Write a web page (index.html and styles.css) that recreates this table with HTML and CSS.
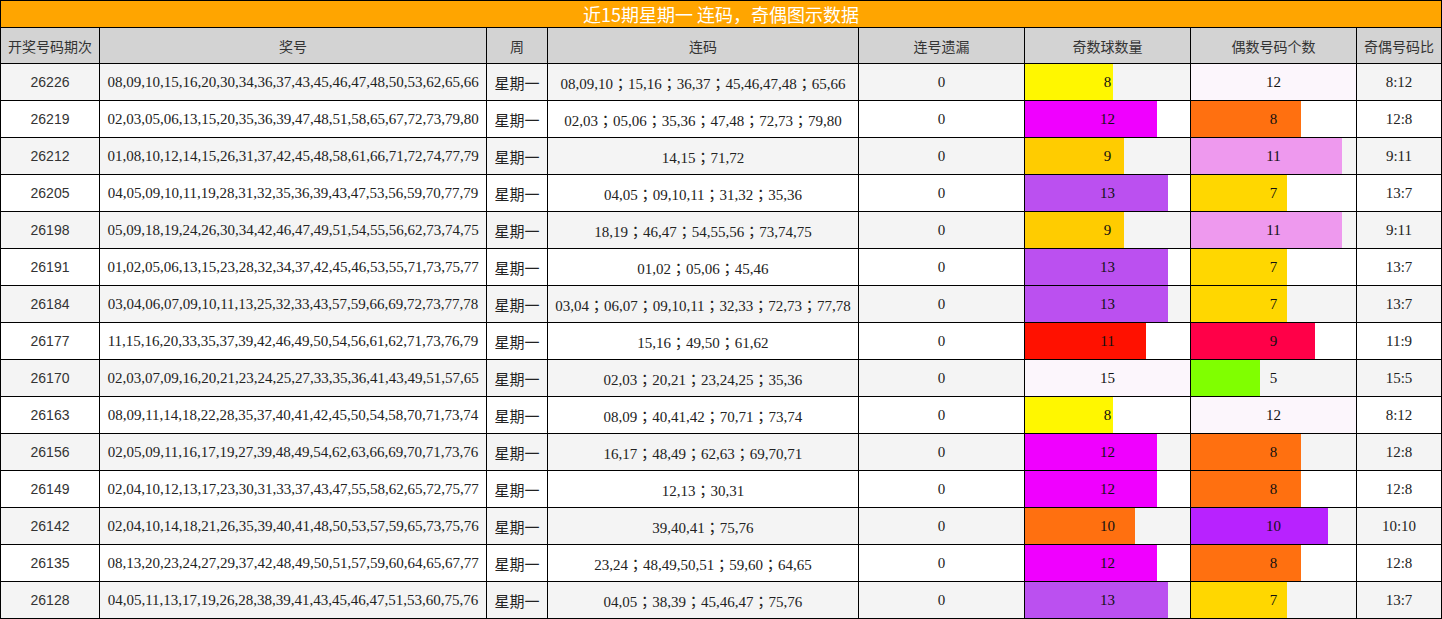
FILE: index.html
```html
<!DOCTYPE html>
<html lang="zh-CN">
<head>
<meta charset="utf-8">
<title>近15期星期一 连码，奇偶图示数据</title>
<link rel="stylesheet" href="styles.css">
</head>
<body>
<div class="board">
  <div class="title">近15期星期一 连码，奇偶图示数据</div>

  <div class="row head">
    <div class="cell">开奖号码期次</div>
    <div class="cell">奖号</div>
    <div class="cell">周</div>
    <div class="cell">连码</div>
    <div class="cell">连号遗漏</div>
    <div class="cell">奇数球数量</div>
    <div class="cell">偶数号码个数</div>
    <div class="cell">奇偶号码比</div>
  </div>

  <div class="row alt">
    <div class="cell issue">26226</div>
    <div class="cell num">08,09,10,15,16,20,30,34,36,37,43,45,46,47,48,50,53,62,65,66</div>
    <div class="cell num">星期一</div>
    <div class="cell num run">08,09,10；15,16；36,37；45,46,47,48；65,66</div>
    <div class="cell num">0</div>
    <div class="cell bar"><span class="fill c-yellow" style="width:53.33%"></span><span class="lbl">8</span></div>
    <div class="cell bar"><span class="fill c-pale" style="width:100%"></span><span class="lbl">12</span></div>
    <div class="cell num">8:12</div>
  </div>

  <div class="row">
    <div class="cell issue">26219</div>
    <div class="cell num">02,03,05,06,13,15,20,35,36,39,47,48,51,58,65,67,72,73,79,80</div>
    <div class="cell num">星期一</div>
    <div class="cell num run">02,03；05,06；35,36；47,48；72,73；79,80</div>
    <div class="cell num">0</div>
    <div class="cell bar"><span class="fill c-magenta" style="width:80%"></span><span class="lbl">12</span></div>
    <div class="cell bar"><span class="fill c-orange" style="width:66.67%"></span><span class="lbl">8</span></div>
    <div class="cell num">12:8</div>
  </div>

  <div class="row alt">
    <div class="cell issue">26212</div>
    <div class="cell num">01,08,10,12,14,15,26,31,37,42,45,48,58,61,66,71,72,74,77,79</div>
    <div class="cell num">星期一</div>
    <div class="cell num run">14,15；71,72</div>
    <div class="cell num">0</div>
    <div class="cell bar"><span class="fill c-amber" style="width:60%"></span><span class="lbl">9</span></div>
    <div class="cell bar"><span class="fill c-violet" style="width:91.67%"></span><span class="lbl">11</span></div>
    <div class="cell num">9:11</div>
  </div>

  <div class="row">
    <div class="cell issue">26205</div>
    <div class="cell num">04,05,09,10,11,19,28,31,32,35,36,39,43,47,53,56,59,70,77,79</div>
    <div class="cell num">星期一</div>
    <div class="cell num run">04,05；09,10,11；31,32；35,36</div>
    <div class="cell num">0</div>
    <div class="cell bar"><span class="fill c-purple" style="width:86.67%"></span><span class="lbl">13</span></div>
    <div class="cell bar"><span class="fill c-gold" style="width:58.33%"></span><span class="lbl">7</span></div>
    <div class="cell num">13:7</div>
  </div>

  <div class="row alt">
    <div class="cell issue">26198</div>
    <div class="cell num">05,09,18,19,24,26,30,34,42,46,47,49,51,54,55,56,62,73,74,75</div>
    <div class="cell num">星期一</div>
    <div class="cell num run">18,19；46,47；54,55,56；73,74,75</div>
    <div class="cell num">0</div>
    <div class="cell bar"><span class="fill c-amber" style="width:60%"></span><span class="lbl">9</span></div>
    <div class="cell bar"><span class="fill c-violet" style="width:91.67%"></span><span class="lbl">11</span></div>
    <div class="cell num">9:11</div>
  </div>

  <div class="row">
    <div class="cell issue">26191</div>
    <div class="cell num">01,02,05,06,13,15,23,28,32,34,37,42,45,46,53,55,71,73,75,77</div>
    <div class="cell num">星期一</div>
    <div class="cell num run">01,02；05,06；45,46</div>
    <div class="cell num">0</div>
    <div class="cell bar"><span class="fill c-purple" style="width:86.67%"></span><span class="lbl">13</span></div>
    <div class="cell bar"><span class="fill c-gold" style="width:58.33%"></span><span class="lbl">7</span></div>
    <div class="cell num">13:7</div>
  </div>

  <div class="row alt">
    <div class="cell issue">26184</div>
    <div class="cell num">03,04,06,07,09,10,11,13,25,32,33,43,57,59,66,69,72,73,77,78</div>
    <div class="cell num">星期一</div>
    <div class="cell num run">03,04；06,07；09,10,11；32,33；72,73；77,78</div>
    <div class="cell num">0</div>
    <div class="cell bar"><span class="fill c-purple" style="width:86.67%"></span><span class="lbl">13</span></div>
    <div class="cell bar"><span class="fill c-gold" style="width:58.33%"></span><span class="lbl">7</span></div>
    <div class="cell num">13:7</div>
  </div>

  <div class="row">
    <div class="cell issue">26177</div>
    <div class="cell num">11,15,16,20,33,35,37,39,42,46,49,50,54,56,61,62,71,73,76,79</div>
    <div class="cell num">星期一</div>
    <div class="cell num run">15,16；49,50；61,62</div>
    <div class="cell num">0</div>
    <div class="cell bar"><span class="fill c-red" style="width:73.33%"></span><span class="lbl">11</span></div>
    <div class="cell bar"><span class="fill c-crimson" style="width:75%"></span><span class="lbl">9</span></div>
    <div class="cell num">11:9</div>
  </div>

  <div class="row alt">
    <div class="cell issue">26170</div>
    <div class="cell num">02,03,07,09,16,20,21,23,24,25,27,33,35,36,41,43,49,51,57,65</div>
    <div class="cell num">星期一</div>
    <div class="cell num run">02,03；20,21；23,24,25；35,36</div>
    <div class="cell num">0</div>
    <div class="cell bar"><span class="fill c-pale" style="width:100%"></span><span class="lbl">15</span></div>
    <div class="cell bar"><span class="fill c-lime" style="width:41.67%"></span><span class="lbl">5</span></div>
    <div class="cell num">15:5</div>
  </div>

  <div class="row">
    <div class="cell issue">26163</div>
    <div class="cell num">08,09,11,14,18,22,28,35,37,40,41,42,45,50,54,58,70,71,73,74</div>
    <div class="cell num">星期一</div>
    <div class="cell num run">08,09；40,41,42；70,71；73,74</div>
    <div class="cell num">0</div>
    <div class="cell bar"><span class="fill c-yellow" style="width:53.33%"></span><span class="lbl">8</span></div>
    <div class="cell bar"><span class="fill c-pale" style="width:100%"></span><span class="lbl">12</span></div>
    <div class="cell num">8:12</div>
  </div>

  <div class="row alt">
    <div class="cell issue">26156</div>
    <div class="cell num">02,05,09,11,16,17,19,27,39,48,49,54,62,63,66,69,70,71,73,76</div>
    <div class="cell num">星期一</div>
    <div class="cell num run">16,17；48,49；62,63；69,70,71</div>
    <div class="cell num">0</div>
    <div class="cell bar"><span class="fill c-magenta" style="width:80%"></span><span class="lbl">12</span></div>
    <div class="cell bar"><span class="fill c-orange" style="width:66.67%"></span><span class="lbl">8</span></div>
    <div class="cell num">12:8</div>
  </div>

  <div class="row">
    <div class="cell issue">26149</div>
    <div class="cell num">02,04,10,12,13,17,23,30,31,33,37,43,47,55,58,62,65,72,75,77</div>
    <div class="cell num">星期一</div>
    <div class="cell num run">12,13；30,31</div>
    <div class="cell num">0</div>
    <div class="cell bar"><span class="fill c-magenta" style="width:80%"></span><span class="lbl">12</span></div>
    <div class="cell bar"><span class="fill c-orange" style="width:66.67%"></span><span class="lbl">8</span></div>
    <div class="cell num">12:8</div>
  </div>

  <div class="row alt">
    <div class="cell issue">26142</div>
    <div class="cell num">02,04,10,14,18,21,26,35,39,40,41,48,50,53,57,59,65,73,75,76</div>
    <div class="cell num">星期一</div>
    <div class="cell num run">39,40,41；75,76</div>
    <div class="cell num">0</div>
    <div class="cell bar"><span class="fill c-orange" style="width:66.67%"></span><span class="lbl">10</span></div>
    <div class="cell bar"><span class="fill c-grape" style="width:83.33%"></span><span class="lbl">10</span></div>
    <div class="cell num">10:10</div>
  </div>

  <div class="row">
    <div class="cell issue">26135</div>
    <div class="cell num">08,13,20,23,24,27,29,37,42,48,49,50,51,57,59,60,64,65,67,77</div>
    <div class="cell num">星期一</div>
    <div class="cell num run">23,24；48,49,50,51；59,60；64,65</div>
    <div class="cell num">0</div>
    <div class="cell bar"><span class="fill c-magenta" style="width:80%"></span><span class="lbl">12</span></div>
    <div class="cell bar"><span class="fill c-orange" style="width:66.67%"></span><span class="lbl">8</span></div>
    <div class="cell num">12:8</div>
  </div>

  <div class="row alt">
    <div class="cell issue">26128</div>
    <div class="cell num">04,05,11,13,17,19,26,28,38,39,41,43,45,46,47,51,53,60,75,76</div>
    <div class="cell num">星期一</div>
    <div class="cell num run">04,05；38,39；45,46,47；75,76</div>
    <div class="cell num">0</div>
    <div class="cell bar"><span class="fill c-purple" style="width:86.67%"></span><span class="lbl">13</span></div>
    <div class="cell bar"><span class="fill c-gold" style="width:58.33%"></span><span class="lbl">7</span></div>
    <div class="cell num">13:7</div>
  </div>
</div>
</body>
</html>
```

FILE: styles.css
```css
html, body {
  margin: 0;
  padding: 0;
  background: #ffffff;
}

.board {
  display: grid;
  grid-template-columns: 98px 386px 60px 310px 165px 165px 165px 84px;
  grid-template-rows: 26px 35px repeat(15, 36px);
  gap: 1px;
  padding: 1px;
  width: max-content;
  background: #000000;
}

.title {
  grid-column: 1 / -1;
  background: #ffa500;
  color: #ffffff;
  font-family: "Noto Sans CJK SC", "Noto Sans", sans-serif;
  font-size: 18px;
  line-height: 26px;
  text-align: center;
}

.row {
  display: contents;
}

.cell {
  display: flex;
  align-items: center;
  justify-content: center;
  background: #ffffff;
  color: #222222;
  font-family: "Liberation Serif", "Noto Sans CJK SC", serif;
  font-size: 15px;
  white-space: nowrap;
  overflow: hidden;
}

.cell.run {
  font-family: "Liberation Serif", "Noto Sans CJK TC", serif;
}

.row.alt .cell {
  background: #f4f4f4;
}

.row.head .cell {
  background: #d3d3d3;
  color: #333333;
  font-family: "Noto Sans CJK SC", sans-serif;
  font-size: 14px;
}

.cell.issue {
  font-family: "Liberation Sans", "Noto Sans", sans-serif;
  font-size: 14px;
  color: #333333;
}

.cell.bar {
  display: grid;
  grid-template-columns: 100%;
  grid-template-rows: 100%;
  align-items: stretch;
  justify-items: start;
}

.bar .fill {
  grid-area: 1 / 1;
  height: 100%;
}

.bar .lbl {
  grid-area: 1 / 1;
  justify-self: center;
  align-self: center;
  color: #111111;
}

.c-yellow  { background: #fff700; }
.c-magenta { background: #f000ff; }
.c-amber   { background: #ffcc00; }
.c-purple  { background: #bb50f0; }
.c-red     { background: #ff1100; }
.c-orange  { background: #ff7010; }
.c-pale    { background: #fcf6fc; }
.c-violet  { background: #ee99ee; }
.c-gold    { background: #ffd700; }
.c-crimson { background: #ff0048; }
.c-lime    { background: #80ff00; }
.c-grape   { background: #b822ff; }
```
